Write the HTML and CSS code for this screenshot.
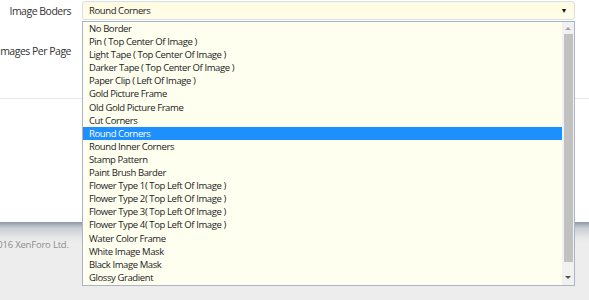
FILE: index.html
```html
<!DOCTYPE html>
<html lang="en">
<head>
    <meta charset="UTF-8">
    <title>Gallery Options</title>
    <link rel="stylesheet" href="styles.css">
</head>
<body>
    <div class="page">
        <div class="content">
            <div class="options">
                <div class="row">
                    <div class="label">Image Boders</div>
                    <div class="field">
                        <div class="select">
                            <span>Round Corners</span>
                            <span class="caret">&#9660;</span>
                        </div>
                    </div>
                </div>
                <div class="row row-tall">
                    <div class="label">Images Per Page</div>
                    <div class="field"></div>
                </div>
            </div>
        </div>
        <div class="footer">
            <div class="copyright">&copy; 2016 XenForo Ltd.</div>
        </div>
    </div>

    <div class="dropdown">
        <ul class="items">
            <li>No Border</li>
            <li>Pin ( Top Center Of Image )</li>
            <li>Light Tape ( Top Center Of Image )</li>
            <li>Darker Tape ( Top Center Of Image )</li>
            <li>Paper Clip ( Left Of Image )</li>
            <li>Gold Picture Frame</li>
            <li>Old Gold Picture Frame</li>
            <li>Cut Corners</li>
            <li class="selected">Round Corners</li>
            <li>Round Inner Corners</li>
            <li>Stamp Pattern</li>
            <li>Paint Brush Barder</li>
            <li>Flower Type 1( Top Left Of Image )</li>
            <li>Flower Type 2( Top Left Of Image )</li>
            <li>Flower Type 3( Top Left Of Image )</li>
            <li>Flower Type 4( Top Left Of Image )</li>
            <li>Water Color Frame</li>
            <li>White Image Mask</li>
            <li>Black Image Mask</li>
            <li>Glossy Gradient</li>
        </ul>
        <div class="scrollbar">
            <span class="arrow up"></span>
            <span class="thumb"></span>
            <span class="arrow down"></span>
        </div>
    </div>
</body>
</html>
```

FILE: styles.css
```css
body { margin: 0; font-family: "Open Sans", "Noto Sans", Arial, sans-serif; color: #333; background: #ededed; }
.page { width: 589px; height: 300px; overflow: hidden; }
.content { height: 222px; background: #fff; }
.options { height: 98px; border-bottom: 1px solid #e3e8ee; }
.row { display: flex; height: 21px; padding-top: 1px; }
.row-tall { height: 42px; padding-top: 0; }
.label { width: 71px; display: flex; justify-content: flex-end; white-space: nowrap; font-size: 10.5px; letter-spacing: -0.5px; color: #333; padding-top: 3px; }
.row-tall .label { padding-top: 22px; }
.field { margin-left: 11px; width: 493px; }
.select { height: 17px; border: 1px solid #d8dde6; border-radius: 3px; background: linear-gradient(#fffbe2, #fffde9); display: flex; justify-content: space-between; align-items: center; padding: 0 7px 0 6px; font-size: 9.5px; letter-spacing: -0.4px; color: #222; }
.caret { font-size: 7px; color: #111; }
.footer { height: 78px; background: linear-gradient(#8d99a6, #c9ced4 6px, #e8e8e9 16px, #ededed 22px); }
.copyright { padding: 16px 0 0 0; margin-left: -18px; font-size: 9.5px; letter-spacing: -0.2px; color: #8c8c8c; }

.dropdown { position: absolute; left: 82px; top: 21px; width: 491px; height: 263px; border: 1px solid #a9b4c8; background: #fffff0; display: flex; }
.items { list-style: none; margin: 0; padding: 0; flex: 1; font-size: 9.5px; letter-spacing: -0.4px; color: #222; }
.items li { height: 13.1px; line-height: 13.1px; padding-left: 6px; white-space: nowrap; }
.items li.selected { background: #1e8ffe; color: #fff; }
.scrollbar { width: 12px; background: #f1f1f1; display: flex; flex-direction: column; align-items: center; }
.arrow { width: 0; height: 0; border-left: 3px solid transparent; border-right: 3px solid transparent; }
.arrow.up { border-bottom: 3px solid #a3a3a3; margin: 5px 0 4px; }
.arrow.down { border-top: 3px solid #505050; margin: 14px 0 6px; }
.thumb { width: 9px; flex: 1; background: #c1c1c1; }
```
